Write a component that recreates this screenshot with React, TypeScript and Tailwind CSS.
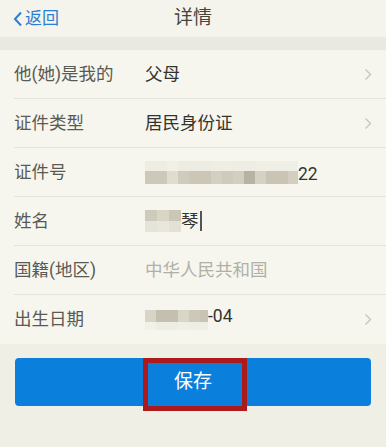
import React from "react";

const FONT = { fontFamily: 'Roboto, "Noto Sans CJK SC", sans-serif' };

function Chevron() {
  return (
    <svg width="8" height="13" viewBox="0 0 8 13" className="mr-[14px]">
      <polyline points="1.5,1.5 6.5,6.5 1.5,11.5" fill="none" stroke="#c6c6bd" strokeWidth="1.4" />
    </svg>
  );
}

function Blur({ rows }: { rows: { h: number; cells: [number, string][] }[] }) {
  return (
    <div className="flex flex-col">
      {rows.map((r, i) => (
        <div key={i} className="flex" style={{ height: r.h }}>
          {r.cells.map(([w, c], j) => (
            <div key={j} style={{ width: w, background: c }} />
          ))}
        </div>
      ))}
    </div>
  );
}

function Row({ label, children, chevron, last }: { label: string; children?: React.ReactNode; chevron?: boolean; last?: boolean }) {
  return (
    <div className={`h-[49px] flex items-center ml-[14px] ${last ? "" : "border-b border-[#e4e4da]"}`}>
      <div className="w-[131px] text-[17.5px] text-[#5a5a55]">{label}</div>
      <div className="flex-1 flex items-center text-[17.5px] text-[#333330]">{children}</div>
      {chevron && <Chevron />}
    </div>
  );
}

export default function App() {
  const idMain: [number, string][] = [
    [22, "#cdc8b8"], [11, "#e0ddd0"], [11, "#d0ccbd"], [22, "#cbc6b6"], [11, "#d4d0c1"], [11, "#cfcbbb"], [11, "#d3cfc0"], [11, "#b7b2a1"], [11, "#d6d2c3"], [22, "#c9c4b4"], [10, "#d3cfc0"],
  ];
  const idTop: [number, string][] = [
    [22, "#eeede3"], [11, "#f1f0e6"], [33, "#edece2"], [22, "#efeee4"], [22, "#eeede3"], [43, "#f0efe5"],
  ];
  return (
    <div className="w-[386px] h-[447px] bg-[#efefe6] flex flex-col relative overflow-hidden" style={FONT}>
      {/* header */}
      <div className="h-[37px] bg-[#f4f4ec] flex items-center relative">
        <div className="flex items-center ml-[13px] text-[#2a7fd0] text-[17px]">
          <svg width="10" height="16" viewBox="0 0 10 16">
            <polyline points="8,1.5 2,8 8,14.5" fill="none" stroke="#2a7fd0" strokeWidth="2" />
          </svg>
          <span className="ml-[2px]">返回</span>
        </div>
        <div className="absolute left-0 right-0 top-0 h-[37px] flex items-center justify-center text-[19px] text-[#444440]">
          详情
        </div>
      </div>
      <div className="h-[13px] bg-[#e9e9e1]" />
      {/* rows */}
      <div className="bg-[#f6f6ee]">
        <Row label="他(她)是我的" chevron>父母</Row>
        <Row label="证件类型" chevron>居民身份证</Row>
        <Row label="证件号">
          <div className="flex items-end">
            <Blur rows={[{ h: 10, cells: idTop }, { h: 13, cells: idMain }]} />
            <span className="leading-[20px]">22</span>
          </div>
        </Row>
        <Row label="姓名">
          <div className="flex items-center">
            <Blur
              rows={[
                { h: 11, cells: [[12, "#cfcbbc"], [12, "#d9d6c8"], [12, "#cbc7b7"]] },
                { h: 11, cells: [[12, "#e6e4d8"], [12, "#e9e7dc"], [12, "#e3e1d5"]] },
              ]}
            />
            <span>琴</span>
            <div className="w-[2px] h-[20px] bg-[#555] ml-[1px]" />
          </div>
        </Row>
        <Row label="国籍(地区)">
          <span className="text-[#b0b0a8]">中华人民共和国</span>
        </Row>
        <Row label="出生日期" chevron last>
          <div className="flex items-start">
            <Blur
              rows={[
                { h: 12, cells: [[11, "#d8d5c7"], [22, "#c4bfae"], [11, "#d9d6c8"], [11, "#cdc9b9"], [8, "#c8c3b3"]] },
                { h: 8, cells: [[11, "#f2f1e8"], [22, "#eeede4"], [11, "#f0efe6"], [19, "#efeee5"]] },
              ]}
            />
            <span className="leading-[14px] -mt-[1px]">-04</span>
          </div>
        </Row>
      </div>
      {/* button */}
      <div className="px-[15px] pt-[14px]">
        <div className="h-[48px] rounded-[4px] bg-[#0b7fdc] flex items-center justify-center text-white text-[19px]">
          保存
        </div>
      </div>
      <div className="absolute left-[143px] top-[358px] w-[104px] h-[53px] border-[5px] border-[#ad1a1c]" />
    </div>
  );
}
